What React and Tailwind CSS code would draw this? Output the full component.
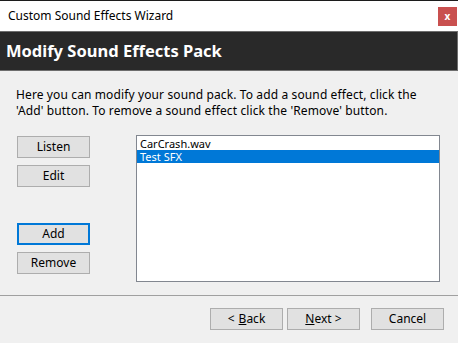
import React from "react";

const font = {fontFamily: '"Segoe UI", "Noto Sans", sans-serif'};

function WinButton({children, active, className = ""}) {
  return (
    <button
      className={`h-[22px] w-[73px] flex items-center justify-center bg-[#e1e1e1] text-[12px] text-black ${
        active ? "border-2 border-[#0078d7]" : "border border-[#adadad]"
      } ${className}`}
    >
      {children}
    </button>
  );
}

function App() {
  return (
    <div
      className="w-[458px] h-[343px] bg-[#f0f0f0] flex flex-col border-t border-[#1c1c1c] overflow-hidden"
      style={font}
    >
      <div className="h-[30px] bg-white flex items-center justify-between pl-2 pr-[1px]">
        <span className="text-[12px] text-black -mt-[1px]">Custom Sound Effects Wizard</span>
        <span className="w-[19px] h-[19px] bg-[#c9504f] text-white text-[10px] font-bold flex items-center justify-center leading-none">
          x
        </span>
      </div>

      <div className="h-[40px] bg-[#292929] border-y border-r border-[#6d6d6d] flex items-center pl-[6px]">
        <h1 className="text-white font-bold text-[16.5px]">Modify Sound Effects Pack</h1>
      </div>

      <div className="pt-[16px] pl-4 text-[12px] leading-4 tracking-[0.12px] text-black">
        <p>Here you can modify your sound pack. To add a sound effect, click the</p>
        <p>'Add' button. To remove a sound effect click the 'Remove' button.</p>
      </div>

      <div className="flex mt-[16px] pl-[17px] pr-[18px]">
        <div className="flex flex-col">
          <WinButton className="mt-[1px]">Listen</WinButton>
          <WinButton className="mt-[7px]">Edit</WinButton>
          <WinButton active className="mt-[36px]">Add</WinButton>
          <WinButton className="mt-[7px]">Remove</WinButton>
        </div>
        <div className="ml-[46px] flex-1 h-[147px] bg-white border border-[#828790] text-[11px] pt-[1px]">
          <div className="px-[3px] h-[13px] leading-[13px] overflow-hidden">CarCrash.wav</div>
          <div className="px-[3px] h-[13px] leading-[13px] overflow-hidden bg-[#0078d7] text-white">Test SFX</div>
        </div>
      </div>

      <div className="mt-[13px] border-t border-[#a0a0a0]" />

      <div className="flex justify-end pt-[12px] pr-[14px]">
        <WinButton>
          &lt; <span className="underline ml-1">B</span>ack
        </WinButton>
        <WinButton className="ml-[4px]">
          <span className="underline">N</span>ext &gt;
        </WinButton>
        <WinButton className="ml-[11px]">Cancel</WinButton>
      </div>
    </div>
  );
}

export default App;
